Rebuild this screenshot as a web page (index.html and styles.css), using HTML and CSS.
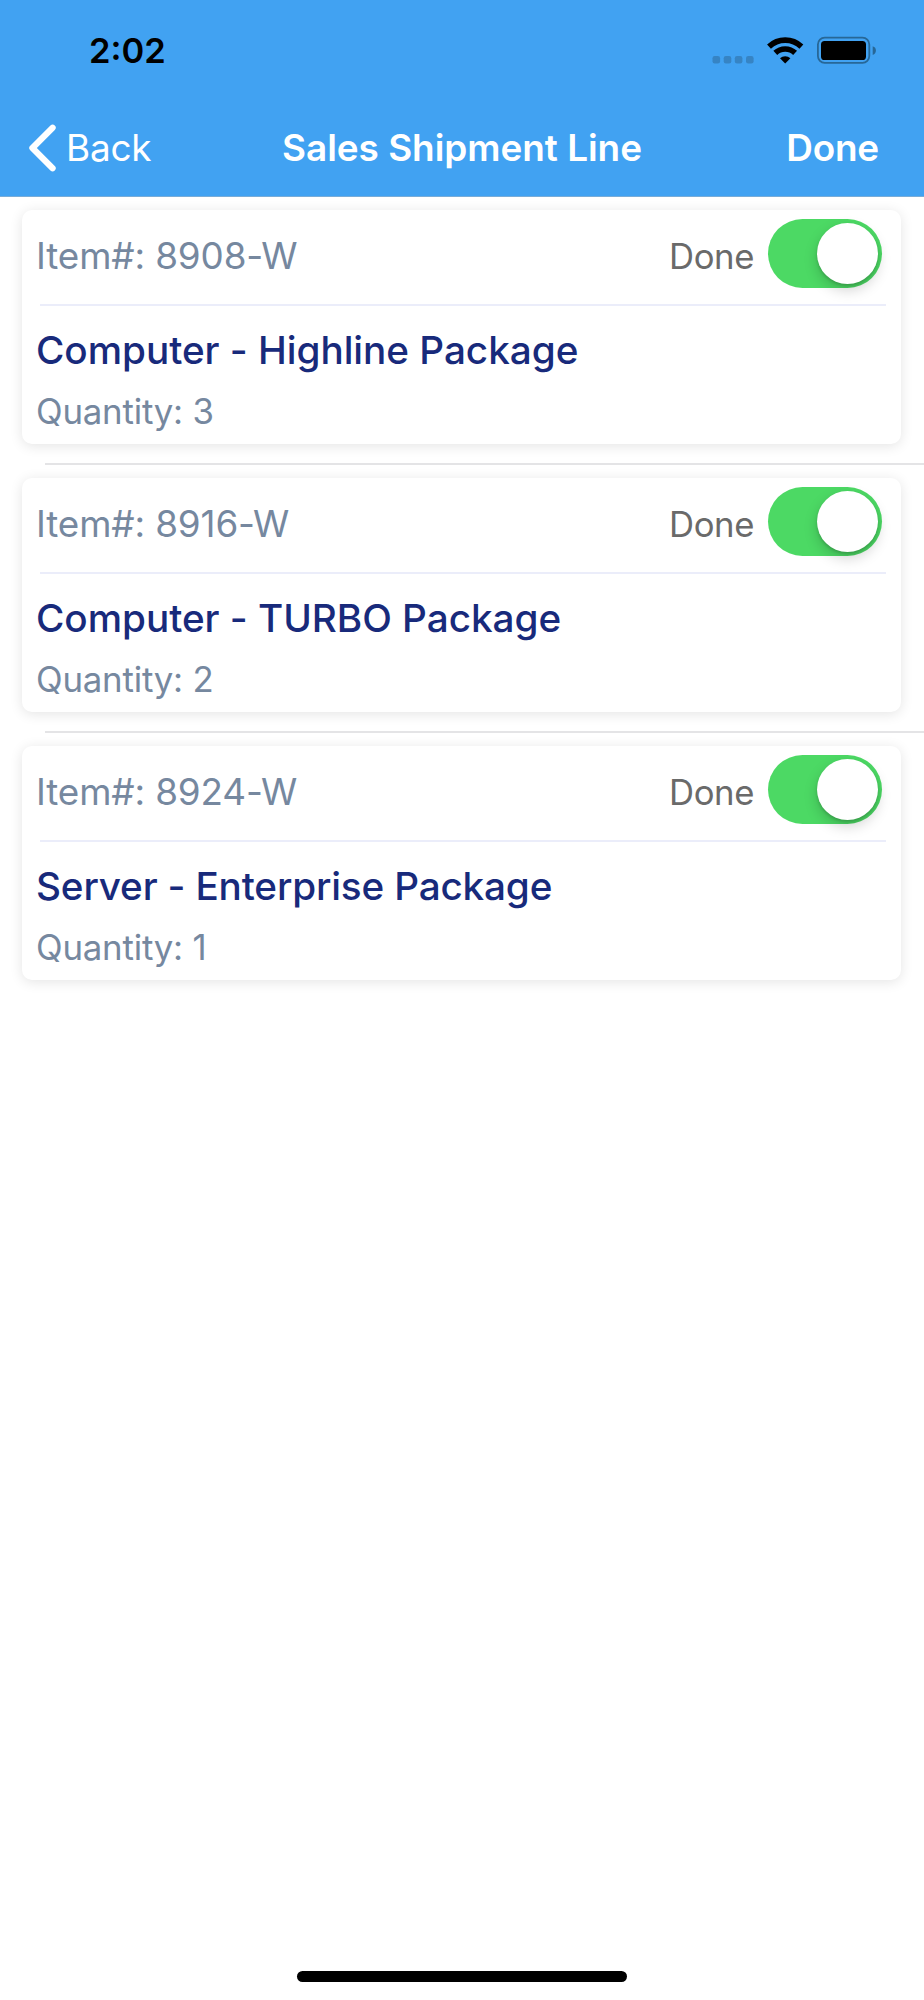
FILE: index.html
```html
<!DOCTYPE html>
<html lang="en">
<head>
<meta charset="utf-8">
<title>Sales Shipment Line</title>
<link rel="stylesheet" href="styles.css">
</head>
<body>
<header class="header">
  <div class="status">
    <span class="time">2:02</span>
    <svg class="status-icons" width="166" height="30" viewBox="0 0 166 30">
      <g fill="#3684c4"><rect x="2.5" y="21" width="7.6" height="7.4" rx="2.2"/><rect x="13.7" y="21" width="7.6" height="7.4" rx="2.2"/><rect x="24.8" y="21" width="7.6" height="7.4" rx="2.2"/><rect x="36" y="21" width="7.6" height="7.4" rx="2.2"/></g>
      <g fill="none" stroke="#000" stroke-width="5.6"><path d="M59 11.6a23.5 23.5 0 0 1 32.4 0"/><path d="M65.3 17.9a14.4 14.4 0 0 1 19.8 0"/></g>
      <path d="M70 23.3a7.8 7.8 0 0 1 10.4 0L75.2 28.4z"/>
      <rect x="107.9" y="2.7" width="51.4" height="25.2" rx="6.8" fill="none" stroke="#276797" stroke-width="1.8"/>
      <rect x="111" y="6" width="45" height="19" rx="3.6"/>
      <path d="M162.7 11.2q3.2 1 3.2 4.4t-3.2 4.4z" fill="#276797"/>
    </svg>
  </div>
  <nav class="nav">
    <span class="back"><svg width="28" height="48" viewBox="0 0 28 48"><path d="M23.6 3.8L3.4 24 23.6 44.2" fill="none" stroke="#fff" stroke-width="6.2" stroke-linecap="round" stroke-linejoin="round"/></svg><span class="back-text">Back</span></span>
    <h1 class="title">Sales Shipment Line</h1>
    <span class="action">Done</span>
  </nav>
</header>
<main class="list">
  <section class="row"><article class="card">
    <div class="top"><span class="item">Item#: 8908-W</span><span class="label">Done</span><span class="toggle"><span class="knob"></span></span></div>
    <h2 class="name">Computer - Highline Package</h2>
    <p class="qty">Quantity: 3</p>
  </article></section>
  <section class="row"><article class="card">
    <div class="top"><span class="item">Item#: 8916-W</span><span class="label">Done</span><span class="toggle"><span class="knob"></span></span></div>
    <h2 class="name">Computer - TURBO Package</h2>
    <p class="qty">Quantity: 2</p>
  </article></section>
  <section class="row"><article class="card">
    <div class="top"><span class="item">Item#: 8924-W</span><span class="label">Done</span><span class="toggle"><span class="knob"></span></span></div>
    <h2 class="name name-tight">Server - Enterprise Package</h2>
    <p class="qty">Quantity: 1</p>
  </article></section>
</main>
<footer class="footer"><div class="home"></div></footer>
</body>
</html>
```

FILE: styles.css
```css
* { box-sizing: border-box; margin: 0; padding: 0; }
body { width: 924px; height: 2000px; display: flex; flex-direction: column; background: #fff; font-family: Inter, sans-serif; overflow: hidden; white-space: nowrap; }
.header { height: 197px; flex: none; background: #41a2f2; border-bottom: 1px solid #78acd8; }
.status { height: 99px; display: flex; justify-content: space-between; align-items: flex-start; padding: 35px 48px 0 89px; }
.time { font-size: 34.5px; font-weight: 600; line-height: 32px; letter-spacing: 0; }
.status-icons { display: block; flex: none; }
.nav { height: 97px; display: grid; grid-template-columns: 1fr auto 1fr; align-items: center; padding: 0 29px; color: #fff; line-height: 46px; }
.back { display: flex; align-items: center; gap: 9px; }
.back-text { font-size: 36.9px; font-weight: 370; letter-spacing: -0.2px; }
.title { font-size: 36.9px; font-weight: 600; letter-spacing: -0.02px; text-align: center; }
.action { font-size: 36.9px; font-weight: 600; letter-spacing: -0.2px; text-align: right; padding-right: 16px; }
.list { flex: 1; padding-top: 13px; }
.row { height: 268px; position: relative; }
.row:not(:last-child)::after { content: ""; position: absolute; left: 45px; right: 0; top: 253px; height: 2px; background: #e4e4e6; }
.card { margin: 0 23px 0 22px; height: 234px; border-radius: 10px; background: #fff; box-shadow: 0 2px 13px rgba(0, 0, 0, .11); padding: 0 15px 0 14px; }
.top { height: 96px; display: flex; align-items: flex-start; position: relative; }
.top::after { content: ""; position: absolute; left: 4px; right: 0; bottom: 0; height: 2px; background: #ebedfa; }
.item { flex: 1; font-size: 36.8px; line-height: 46px; margin-top: 23px; letter-spacing: -0.12px; color: #76889f; }
.label { font-size: 34.7px; line-height: 46px; margin: 23px 14px 0 0; color: #6a6a6a; letter-spacing: -0.4px; }
.toggle { width: 114px; height: 69px; border-radius: 35px; background: #4cd964; margin: 9px 4px 0 0; padding: 4px; display: flex; justify-content: flex-end; }
.knob { width: 61px; height: 61px; border-radius: 50%; background: #fff; box-shadow: 0 6px 14px rgba(0, 0, 0, .18), 0 2px 3px rgba(0, 0, 0, .15); }
.name { font-size: 38.7px; font-weight: 500; line-height: 48px; margin-top: 20px; color: #182a7b; letter-spacing: -0.03px; }
.name-tight { letter-spacing: -0.17px; }
.qty { font-size: 34.8px; line-height: 46px; margin-top: 14px; color: #76889f; letter-spacing: -0.2px; }
.footer { height: 29px; display: flex; justify-content: center; }
.home { width: 330px; height: 11px; border-radius: 6px; background: #000; }
```
